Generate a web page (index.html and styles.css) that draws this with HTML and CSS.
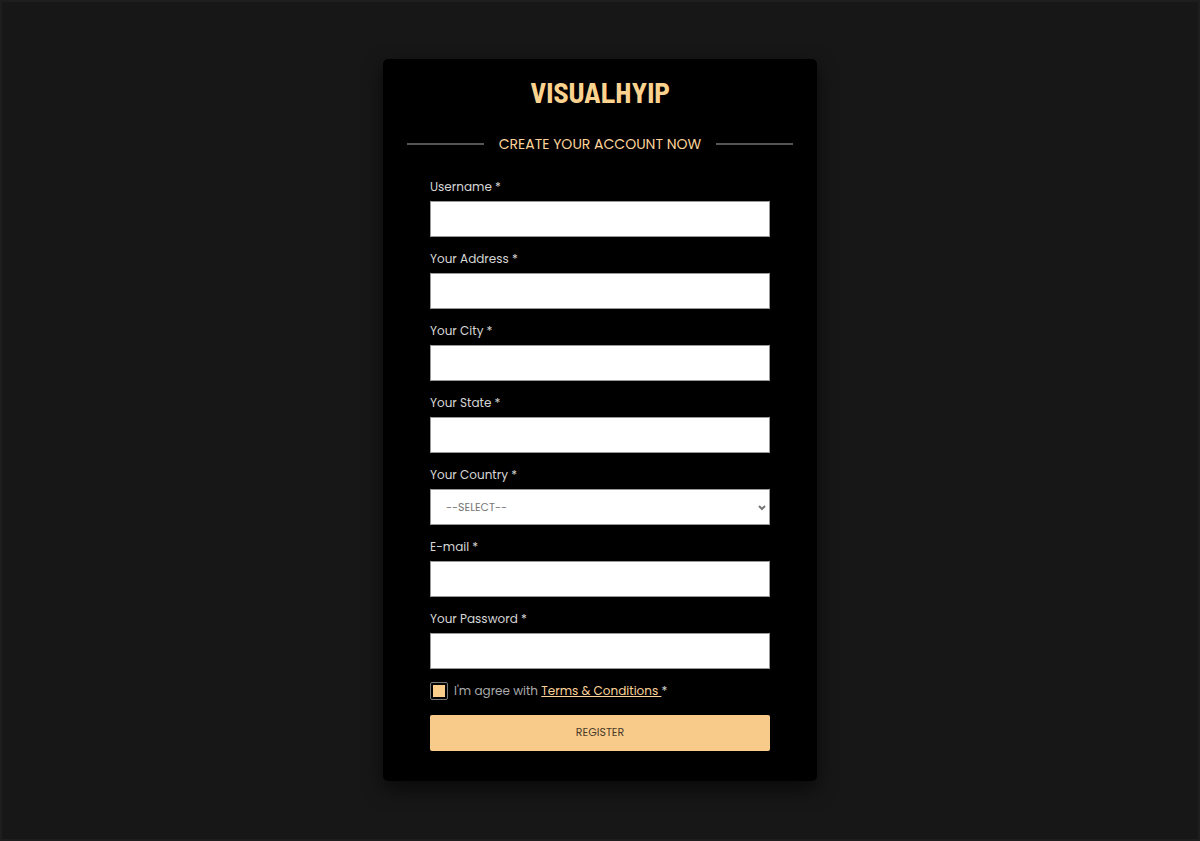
FILE: index.html
```html
<!DOCTYPE html>
<html lang="en">
<head>
  <meta charset="UTF-8">
  <meta name="viewport" content="width=device-width, initial-scale=1.0">
  <title>VisualHYIP - Register</title>
  <link rel="stylesheet" href="styles.css">
</head>
<body>
  <main class="card">
    <h1 class="logo">VISUALHYIP</h1>
    <h2 class="title">CREATE YOUR ACCOUNT NOW</h2>

    <form class="form">
      <div class="field">
        <label for="username">Username *</label>
        <input type="text" id="username" name="username">
      </div>
      <div class="field">
        <label for="address">Your Address *</label>
        <input type="text" id="address" name="address">
      </div>
      <div class="field">
        <label for="city">Your City *</label>
        <input type="text" id="city" name="city">
      </div>
      <div class="field">
        <label for="state">Your State *</label>
        <input type="text" id="state" name="state">
      </div>
      <div class="field">
        <label for="country">Your Country *</label>
        <div class="select-wrap">
          <select id="country" name="country">
            <option value="">--SELECT--</option>
          </select>
          <svg class="arrow" viewBox="0 0 8 6" aria-hidden="true"><path d="M1 1l3 3 3-3"/></svg>
        </div>
      </div>
      <div class="field">
        <label for="email">E-mail *</label>
        <input type="email" id="email" name="email">
      </div>
      <div class="field">
        <label for="password">Your Password *</label>
        <input type="password" id="password" name="password">
      </div>
      <div class="agree">
        <input type="checkbox" id="agree" name="agree" checked>
        <label for="agree">I'm agree with <a href="#">Terms &amp; Conditions </a><span class="required">*</span></label>
      </div>
      <button type="submit" class="btn">REGISTER</button>
    </form>
  </main>
</body>
</html>
```
FILE: styles.css
```css
* {
  box-sizing: border-box;
}
body {
  margin: 0;
  min-height: 100vh;
  padding-bottom: 2px;
  display: flex;
  align-items: center;
  justify-content: center;
  background: #171717;
  border: 2px solid #1e1e1e;
  color: #d6d6d6;
  font-family: Poppins, Inter, sans-serif;
  font-size: 12px;
  line-height: 20px;
}
.card {
  width: 100%;
  max-width: 434px;
  padding: 17px 24px 30px;
  background: #000;
  border-radius: 5px;
  box-shadow: 0 8px 20px rgba(0, 0, 0, 0.6);
}
.logo {
  margin: 0 0 26px;
  color: #fbd38f;
  font-family: "Barlow Semi Condensed", "Roboto Condensed", Roboto, sans-serif;
  font-size: 29px;
  font-weight: bold;
  line-height: 32px;
  text-align: center;
}
.title {
  display: flex;
  align-items: center;
  gap: 15px;
  margin: 0 0 23px;
  color: #fbd39a;
  font-size: 14px;
  font-weight: 400;
}
.title::before,
.title::after {
  content: "";
  flex: 1;
  height: 2px;
  background: #555;
}
.form {
  padding: 0 23px;
}
.field {
  margin-bottom: 12px;
}
.field label {
  display: block;
  margin-bottom: 4px;
}
.field input,
.field select {
  display: block;
  width: 100%;
  height: 36px;
  padding: 0 15px;
  background: #fff;
  border: 1px solid #999;
  border-radius: 0;
  font-family: inherit;
  font-size: 11px;
  color: #777;
}
.field select {
  appearance: none;
}
.select-wrap {
  position: relative;
}
.arrow {
  position: absolute;
  top: 16px;
  right: 4px;
  width: 8px;
  height: 6px;
  fill: none;
  stroke: #777;
  stroke-width: 2;
  pointer-events: none;
}
.agree {
  display: flex;
  align-items: center;
  gap: 6px;
  margin-bottom: 14px;
  color: #aaa;
}
.agree input {
  appearance: none;
  width: 18px;
  height: 18px;
  margin: 0;
  padding: 2px;
  background: #fbcd8b content-box;
  border: 1px solid #777;
  border-radius: 2px;
}
.agree a {
  color: #fbd39a;
}
.required {
  color: #d6d6d6;
}
.btn {
  display: block;
  width: 100%;
  height: 36px;
  background: #f9cb8b;
  border: none;
  border-radius: 2px;
  color: #4a3c2a;
  font-family: inherit;
  font-size: 11px;
  cursor: pointer;
}
```
